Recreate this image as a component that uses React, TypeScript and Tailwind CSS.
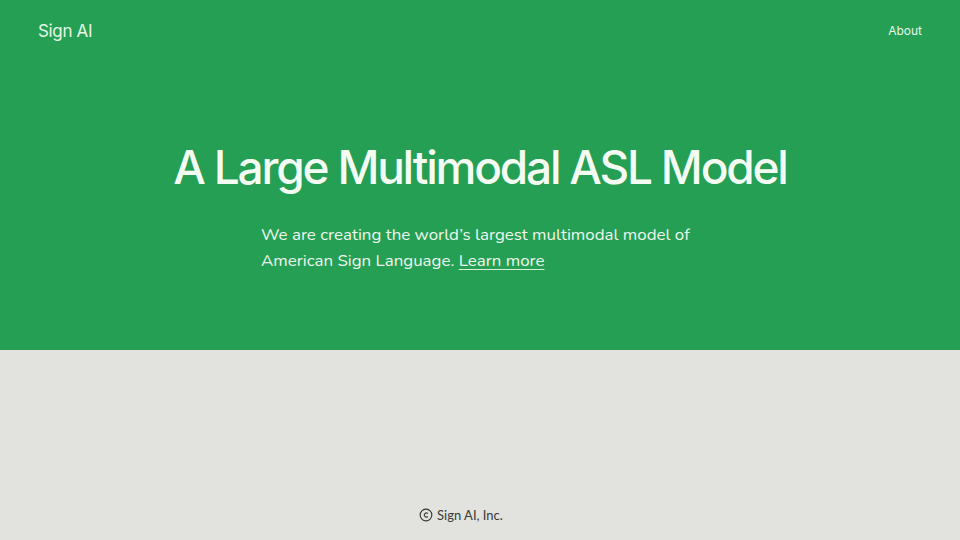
import React from 'react';

const App: React.FC = () => {
  return (
    <div className="min-h-screen w-full bg-[#e2e2de] flex flex-col">
      {/* Hero */}
      <div className="h-[350px] bg-[#249f53] flex flex-col">
        <div className="h-[62px] pt-[2px] px-[38px] flex items-center justify-between">
          <span className="font-['Inter',sans-serif] text-[17px] text-[#e6f5e6] tracking-[-0.02em]">Sign AI</span>
          <span className="-mt-[2px] font-['Inter',sans-serif] text-[12px] text-[#e6f5e6]">About</span>
        </div>
        <h1 className="mt-[77px] text-center font-['Inter',sans-serif] font-[450] text-[46px] leading-[56px] text-[#f4fbf2] tracking-[-0.048em]">
          A Large Multimodal ASL Model
        </h1>
        <p className="mt-[27px] w-[438px] mx-auto font-['Nunito','Lato',sans-serif] text-[16.9px] leading-[26px] text-[#eef7ee]">
          We are creating the world’s largest multimodal model of American Sign Language.{' '}
          <a href="#" className="underline underline-offset-[3px] decoration-1 decoration-[#d7eed9]">Learn more</a>
        </p>
      </div>
      {/* Footer */}
      <div className="flex-1 flex items-end justify-center pb-[15px] pr-[38px]">
        <div className="flex items-center gap-[4px] font-['Lato',sans-serif] text-[13px] text-[#3a3a3a]">
          <svg width="14" height="14" viewBox="0 0 24 24" fill="none" stroke="#3a3a3a" strokeWidth="2">
            <circle cx="12" cy="12" r="10" />
            <path d="M15 9.5a3.5 3.5 0 1 0 0 5" />
          </svg>
          <span>Sign AI, Inc.</span>
        </div>
      </div>
    </div>
  );
};

export default App;
